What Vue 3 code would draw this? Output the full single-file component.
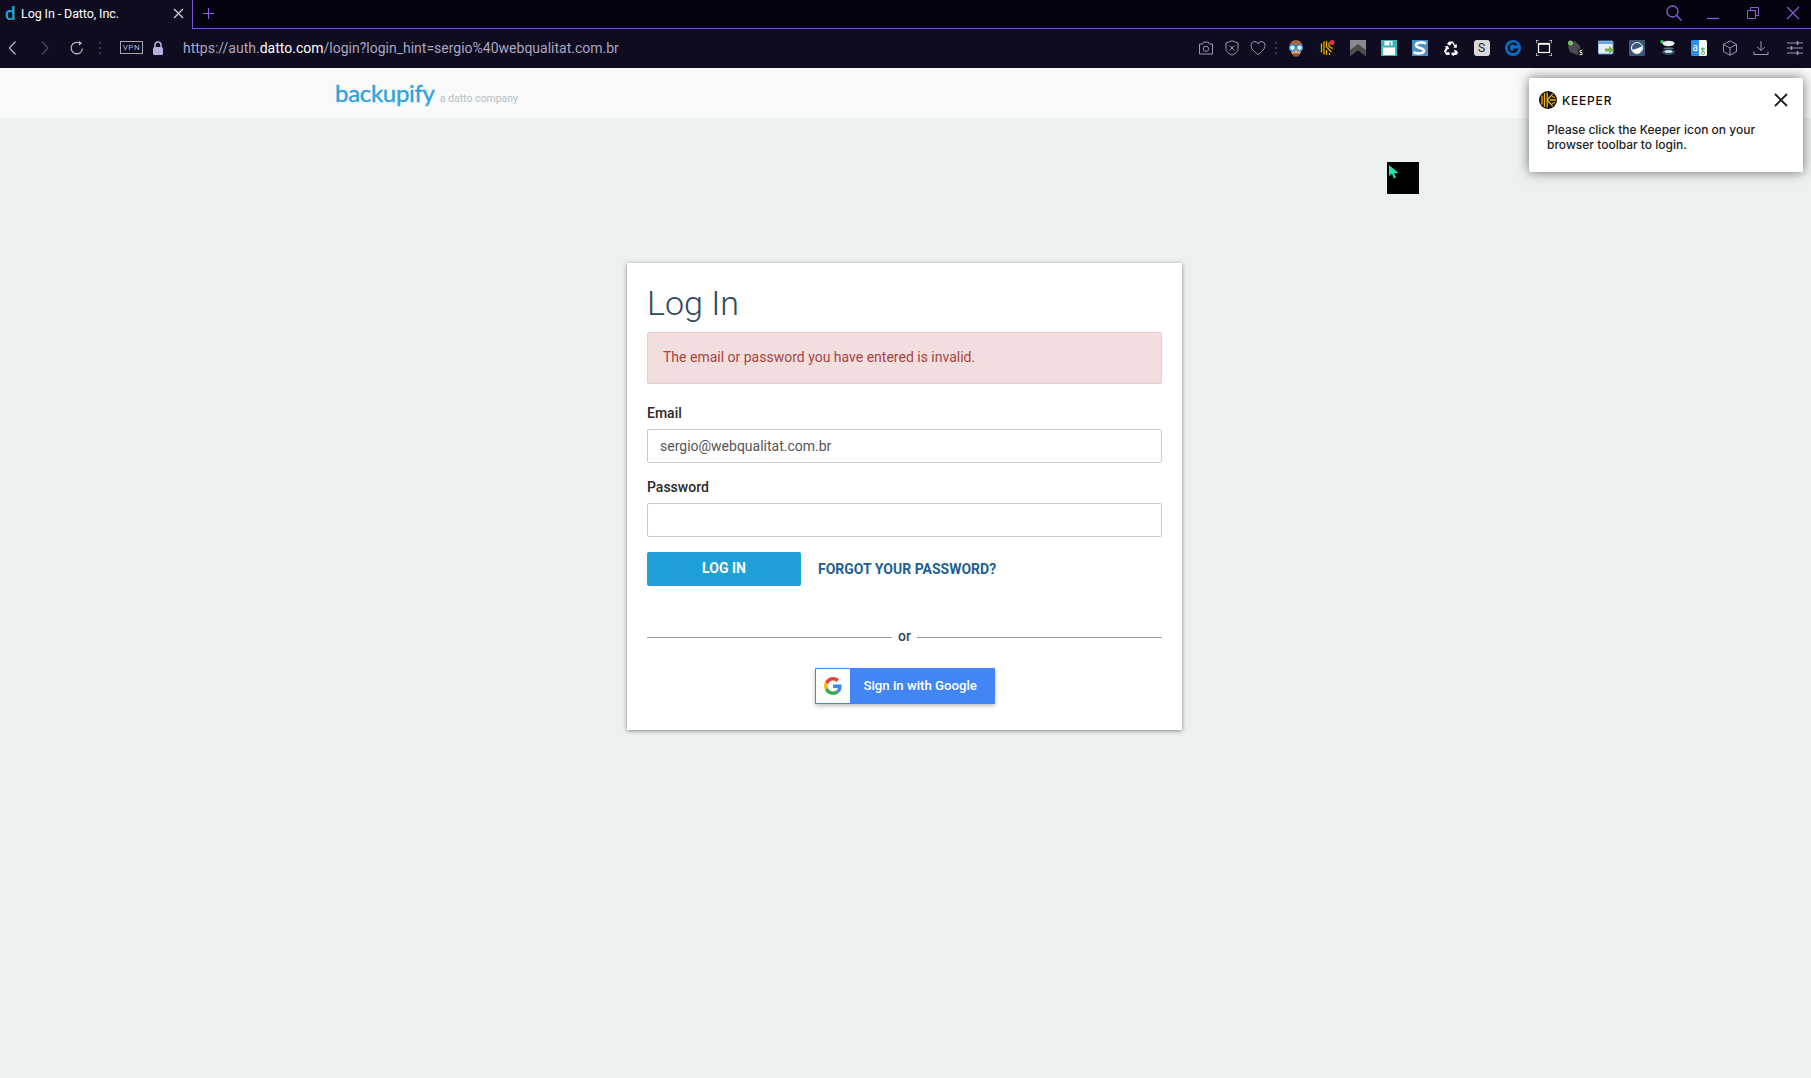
<script setup>
const email = 'sergio@webqualitat.com.br'
</script>

<template>
  <div class="shell">
    <div class="tabbar">
      <div class="tab">
        <span class="tab-favicon">d</span>
        <span class="tab-title">Log In - Datto, Inc.</span>
        <svg class="tab-close" width="11" height="11" viewBox="0 0 11 11"><path d="M1 1l9 9M10 1l-9 9" stroke="#d8d6e4" stroke-width="1.2" fill="none" /></svg>
      </div>
      <div class="tab-rest">
        <svg class="tab-plus" width="11" height="11" viewBox="0 0 11 11"><path d="M5.5 0v11M0 5.500h11" stroke="#8f63e6" stroke-width="1" fill="none" /></svg>
        <div class="window-controls">
          <svg class="wc wc-search" width="18" height="18" viewBox="0 0 18 18"><circle cx="7.500" cy="7.500" r="5.500" stroke="#8a5fe0" stroke-width="1.300" fill="none" /><path d="M11.500 11.500l5 5" stroke="#8a5fe0" stroke-width="1.300" /></svg>
          <svg class="wc" width="14" height="14" viewBox="0 0 14 14"><path d="M1 12.500h12" stroke="#8a5fe0" stroke-width="1.200" /></svg>
          <svg class="wc" width="14" height="14" viewBox="0 0 14 14"><path d="M1.500 4.500h8v8h-8zM4.500 4.500v-3h8v8h-3" stroke="#8a5fe0" stroke-width="1" fill="none" /></svg>
          <svg class="wc" width="14" height="14" viewBox="0 0 14 14"><path d="M1 1l12 12M13 1l-12 12" stroke="#8a5fe0" stroke-width="1.100" /></svg>
        </div>
      </div>
    </div>

    <div class="toolbar">
      <svg class="nav nav-back" width="10" height="16" viewBox="0 0 10 16"><path d="M8 1.500L2 8l6 6.500" stroke="#b5b2c6" stroke-width="1.300" fill="none" /></svg>
      <svg class="nav" width="10" height="16" viewBox="0 0 10 16"><path d="M2 1.500L8 8l-6 6.500" stroke="#4a4759" stroke-width="1.300" fill="none" /></svg>
      <svg class="nav" width="16" height="16" viewBox="0 0 16 16"><path d="M13.500 8.500A5.700 5.700 0 1 1 11 3.300" stroke="#b5b2c6" stroke-width="1.300" fill="none" /><path d="M10 .8l3.200 2.500-3.200 2.200z" fill="#b5b2c6" /></svg>
      <span class="dots"></span>
      <span class="vpn">VPN</span>
      <svg class="lock" width="12" height="14" viewBox="0 0 12 14"><path d="M3 6V4a3 3 0 0 1 6 0v2" stroke="#b9afe0" stroke-width="1.500" fill="none" /><rect x="1" y="6" width="10" height="8" rx="1.500" fill="#b9afe0" /></svg>
      <div class="url">https://auth.<b>datto.com</b>/login?login_hint=sergio%40webqualitat.com.br</div>

      <div class="tools">
        <span class="tool narrow"><svg width="16" height="16" viewBox="0 0 16 16"><path d="M1.500 4h3.200l1-2h4.600l1 2h3.200v10h-13z" stroke="#9a96b4" fill="none" /><circle cx="8" cy="8.800" r="2.600" stroke="#9a96b4" fill="none" /></svg></span>
        <span class="tool narrow"><svg width="16" height="16" viewBox="0 0 16 16"><path d="M8 .8l6 2.200v5.500c0 3-3 5.300-6 6.700-3-1.400-6-3.700-6-6.700V3z" stroke="#9a96b4" fill="none" /><path d="M5.500 5.500l5 5M10.500 5.500l-5 5" stroke="#9a96b4" /></svg></span>
        <span class="tool narrow"><svg width="16" height="16" viewBox="0 0 16 16"><path d="M8 14.500C4 11.300 1 8.800 1 5.500A3.600 3.600 0 0 1 8 4a3.600 3.600 0 0 1 7 1.500c0 3.300-3 5.800-7 9z" stroke="#9a96b4" fill="none" /></svg></span>
        <span class="dots tool-dots"></span>

        <span class="tool first"><svg width="18" height="18" viewBox="0 0 18 18"><path d="M2.500 9C2 4 5 1 9 1s7 3 6.500 8z" fill="#a5683a" /><path d="M3.500 9h11c0 5-2.500 8-5.500 8s-5.500-3-5.500-8z" fill="#e3a27a" /><circle cx="5.500" cy="8.800" r="2.900" fill="#e8f4ff" stroke="#2d8fe0" stroke-width="1.400" /><circle cx="12.500" cy="8.800" r="2.900" fill="#e8f4ff" stroke="#2d8fe0" stroke-width="1.400" /><path d="M6 14.500h6v3H6z" fill="#8a5630" /></svg></span>
        <span class="tool"><svg width="18" height="18" viewBox="0 0 18 18"><circle cx="9" cy="9" r="8" fill="#14120c" /><path d="M3.500 4.500v9M6 2.500v13M8.500 2v6l5 5M11 3.500v4l4 2M8.500 11v5M11.500 14v2" stroke="#e4a812" stroke-width="1.300" fill="none" /><circle cx="14" cy="3.500" r="2.500" fill="#e8304a" /></svg></span>
        <span class="tool"><svg width="16" height="16" viewBox="0 0 16 16"><path d="M0 0h16v16l-8-6-8 6z" fill="#8a8a8a" /><path d="M0 16V10l8-6 8 6v6l-8-6z" fill="#4d4d4d" /></svg></span>
        <span class="tool"><svg width="16" height="16" viewBox="0 0 16 16"><rect width="16" height="16" fill="#3eb0b6" /><path d="M2 1h9.500v4.500H10V2H8.500v3.500H3.500V1zM2 7.500h12V15H2z" fill="#fff" /></svg></span>
        <span class="tool"><svg width="16" height="16" viewBox="0 0 16 16"><rect width="16" height="16" fill="#4b8fc4" /><path d="M14 3.500C10 1.800 4 2.200 4 5.300c0 3.300 8 2.100 8 5.400 0 3-6 3.300-10.500 1.500" stroke="#fff" stroke-width="2.600" fill="none" /></svg></span>
        <span class="tool"><svg width="16" height="16" viewBox="0 0 16 16"><path d="M6 1.500h4l2 3.500 1.800-1v3.800H10l1.500-1-2.500-4-2 3-3-1.700zM1 11l2-3.500-1.700-1 3.600-.6 1.700 3.500-1.700-.6-2 3.500h3.600V15H3.200zM9 12.500h3.200l-1.700-2.800 3.500 1 1 2-1.500 2.300H11v1.500L8 14z" fill="#fff" /></svg></span>
        <span class="tool"><span class="ext-s">S</span></span>
        <span class="tool"><svg width="16" height="16" viewBox="0 0 16 16"><circle cx="8" cy="8" r="8" fill="#0a6cc0" /><path d="M11.500 5.200A4.300 4.300 0 1 0 12 9.500H8" stroke="#0b1016" stroke-width="2" fill="none" /></svg></span>
        <span class="tool"><svg width="16" height="16" viewBox="0 0 16 16"><path d="M0 3V0h3M13 0h3v3M16 13v3h-3M3 16H0v-3" stroke="#fff" stroke-width="1.200" fill="none" /><rect x="2.500" y="3.500" width="11" height="9" stroke="#fff" stroke-width="1.200" fill="none" /><path d="M2.500 4h11" stroke="#fff" stroke-width="1.500" /></svg></span>
        <span class="tool"><svg width="16" height="16" viewBox="0 0 16 16"><path d="M3 3l5-2 5 5 1 5-4 4-7-3-2-5z" fill="#4a4a50" /><circle cx="3.500" cy="3" r="2.500" fill="#7fbf6a" /><path d="M11 9h5v7h-5z" fill="#1a1a22" /><path d="M15 10.500h-2v2h2v2h-2.500" stroke="#ddd" fill="none" /></svg></span>
        <span class="tool"><svg width="16" height="16" viewBox="0 0 16 16"><rect y="1" width="15" height="13" rx="1" fill="#e4effa" stroke="#5b93cf" /><path d="M0 1.500h15v2.500H0z" fill="#6ea4dc" /><path d="M7 8.500h4V6l5 4-5 4v-2.500H7z" fill="#7ab648" /></svg></span>
        <span class="tool"><svg width="16" height="16" viewBox="0 0 16 16"><rect width="16" height="16" rx="1" fill="#3c5677" /><circle cx="8" cy="8" r="5.500" stroke="#fff" fill="none" /><path d="M2.800 9.500C6 10 10 7.500 13 6.500 13.500 10 11 13.500 8 13.500c-2.500 0-4.500-1.800-5.200-4z" fill="#fff" /></svg></span>
        <span class="tool"><svg width="16" height="16" viewBox="0 0 16 16"><circle cx="2" cy="1.800" r="1.800" fill="#2fd044" /><ellipse cx="8.500" cy="3.500" rx="6" ry="2.700" fill="#e8eef2" /><path d="M5 7.500h7L14 9H3z" fill="#5a7486" /><ellipse cx="8.500" cy="12" rx="6.500" ry="3" fill="#34536a" /><ellipse cx="8.500" cy="11.500" rx="4" ry="1.300" fill="#e8eef2" /></svg></span>
        <span class="tool"><svg width="16" height="16" viewBox="0 0 16 16"><path d="M1.500 0H8v16H1.500A1.500 1.500 0 0 1 0 14.500v-13A1.500 1.500 0 0 1 1.500 0z" fill="#2f8eec" /><path d="M8 0h6.500A1.500 1.500 0 0 1 16 1.500v13a1.500 1.500 0 0 1-1.500 1.500H8z" fill="#f4f6f2" /><text x="1.500" y="10.500" font-size="10" fill="#fff" font-family="Roboto, sans-serif">a</text><path d="M10 9h4M12 7.500c0 3-1 5.500-2 6.500M11 11c1 0 2.500.5 2.500 2s-1 1.500-2 1.500" stroke="#4f9a3d" fill="none" /></svg></span>
        <span class="tool"><svg width="16" height="16" viewBox="0 0 16 16"><path d="M8 .8l6.500 3.600v7.200L8 15.200l-6.500-3.600V4.400zM1.500 4.400L8 8l6.500-3.600M8 8v7.200" stroke="#9a96b4" fill="none" /></svg></span>
        <span class="tool"><svg width="16" height="16" viewBox="0 0 16 16"><path d="M8 1v9.500M4 7l4 3.500L12 7M1 11.500v3h14v-3" stroke="#9a96b4" fill="none" /></svg></span>
        <span class="tool tool-last"><svg width="16" height="16" viewBox="0 0 16 16"><path d="M0 3h16M0 8h16M0 13h16" stroke="#9a96b4" /><path d="M10.500 1v4M4.500 6v4M10.500 11v4" stroke="#9a96b4" stroke-width="1.500" /></svg></span>
      </div>
    </div>

    <div class="page">
      <header class="brand-bar">
        <span class="brand">backupify</span>
        <span class="brand-sub">a datto company</span>
      </header>

      <main class="content">
        <section class="card">
          <h1 class="title">Log In</h1>
          <div class="alert">The email or password you have entered is invalid.</div>

          <label class="label" for="email">Email</label>
          <input id="email" class="input input-email" type="text" :value="email" />

          <label class="label" for="password">Password</label>
          <input id="password" class="input" type="password" />

          <div class="actions">
            <button class="login" type="button">LOG IN</button>
            <a class="forgot" href="#">FORGOT YOUR PASSWORD?</a>
          </div>

          <div class="divider"><span>or</span></div>

          <button class="google" type="button">
            <span class="google-icon">
              <svg width="18" height="18" viewBox="0 0 48 48">
                <path fill="#EA4335" d="M24 9.500c3.540 0 6.710 1.220 9.210 3.600l6.850-6.850C35.900 2.380 30.470 0 24 0 14.620 0 6.510 5.380 2.560 13.220l7.980 6.190C12.430 13.720 17.740 9.500 24 9.500z" />
                <path fill="#4285F4" d="M46.980 24.550c0-1.570-.15-3.090-.38-4.550H24v9.020h12.940c-.58 2.960-2.260 5.480-4.780 7.180l7.730 6c4.510-4.180 7.090-10.360 7.090-17.650z" />
                <path fill="#FBBC05" d="M10.530 28.590c-.48-1.450-.76-2.990-.76-4.590s.27-3.140.76-4.590l-7.980-6.190C.92 16.460 0 20.120 0 24c0 3.880.92 7.540 2.560 10.780l7.970-6.190z" />
                <path fill="#34A853" d="M24 48c6.480 0 11.930-2.130 15.890-5.810l-7.730-6c-2.150 1.450-4.920 2.300-8.160 2.300-6.260 0-11.570-4.220-13.470-9.910l-7.980 6.190C6.510 42.620 14.620 48 24 48z" />
              </svg>
            </span>
            <span class="google-text">Sign in with Google</span>
          </button>
        </section>
      </main>

      <aside class="keeper">
        <div class="keeper-head">
          <svg width="18" height="18" viewBox="0 0 18 18"><circle cx="9" cy="9" r="9" fill="#14120c" /><path d="M3 4.500v9M5.500 2v14M8.200 1.500v15" stroke="#f0b31a" stroke-width="1.300" fill="none" /><path d="M8.200 9l5.500-6M8.200 9l5.500 6M11 9h6M13 5.500l3 1M13 12.500l3-1" stroke="#f0b31a" stroke-width="1.300" fill="none" /></svg>
          <span class="keeper-name">KEEPER</span>
          <svg class="keeper-close" width="14" height="14" viewBox="0 0 14 14"><path d="M1 1l12 12M13 1L1 13" stroke="#1a1a1a" stroke-width="1.800" /></svg>
        </div>
        <p class="keeper-text">Please click the Keeper icon on your browser toolbar to login.</p>
      </aside>

      <div class="cursor-box">
        <svg width="10" height="14" viewBox="0 0 10 14"><path d="M0 0v11l3-2.500L5 13.500l2-1L5 8h4.500z" fill="#1de9b6" /></svg>
      </div>
    </div>
  </div>
</template>

<style scoped>
.shell {
  min-height: 1078px;
  display: flex;
  flex-direction: column;
  font-family: Roboto, "Liberation Sans", sans-serif;
}

.tabbar {
  height: 29px;
  display: flex;
  background: #05030f;
}

.tab {
  width: 193px;
  box-sizing: border-box;
  display: flex;
  align-items: center;
  padding: 0 0 2px 5px;
  background: #0f0c1f;
  border-right: 1px solid #7a52d6;
  color: #fff;
}

.tab-favicon {
  width: 16px;
  font-size: 19px;
  line-height: 24px;
  font-weight: 500;
  color: #26a0da;
}

.tab-title {
  font-size: 12.500px;
  letter-spacing: -0.1px;
}

.tab-close {
  margin-left: auto;
  margin-right: 8px;
}

.tab-rest {
  flex: 1;
  display: flex;
  align-items: center;
  border-bottom: 1px solid #7a52d6;
  padding: 0 0 2px 10px;
}

.window-controls {
  margin-left: auto;
  margin-right: 11px;
  display: flex;
  align-items: center;
  gap: 26px;
}

.wc-search {
  margin-right: -3px;
}

.toolbar {
  height: 39px;
  box-sizing: border-box;
  display: flex;
  align-items: center;
  gap: 8px;
  padding-bottom: 2px;
  background: #0f0c1f;
  color: #b5b2c6;
}

.nav {
  width: 24px;
  flex: none;
}

.nav-back {
  width: 25px;
}

.dots {
  width: 2px;
  height: 12px;
  margin: 0 2px;
  flex: none;
  background: repeating-linear-gradient(#3b384b 0 2px, transparent 2px 5px);
}

.vpn {
  width: 23px;
  height: 13px;
  margin-left: 9px;
  box-sizing: border-box;
  border: 1px solid #a6a3b8;
  font-size: 8px;
  line-height: 11px;
  letter-spacing: 0.6px;
  text-align: center;
}

.lock {
  margin-left: 1px;
  flex: none;
}

.url {
  margin-left: 11px;
  font-size: 14px;
  color: #aaa6c0;
  white-space: nowrap;
}

.url b {
  font-weight: 400;
  color: #fff;
}

.tools {
  margin-left: auto;
  margin-right: 1px;
  display: flex;
  align-items: center;
}

.tool {
  width: 31px;
  display: flex;
  justify-content: center;
  align-items: center;
  flex: none;
}

.tool.narrow {
  width: 26px;
}

.tool-dots {
  margin: 0 0 0 4px;
}

.tool.first {
  margin-left: 3px;
}

.tool-last {
  margin-left: 3px;
}

.ext-s {
  width: 16px;
  height: 16px;
  border-radius: 3px;
  background: #d8d8d8;
  color: #222;
  font-size: 12px;
  line-height: 16px;
  text-align: center;
}

.page {
  position: relative;
  flex: 1;
  display: flex;
  flex-direction: column;
  background: #ecf0f1;
}

.brand-bar {
  height: 50px;
  box-sizing: border-box;
  display: flex;
  align-items: baseline;
  gap: 5px;
  padding: 9px 0 0 335px;
  background: #f8f9f9;
}

.brand {
  font-family: Lato, sans-serif;
  font-size: 24px;
  line-height: 32px;
  letter-spacing: -0.3px;
  color: #2fa3db;
  -webkit-text-stroke: 0.4px #2fa3db;
}

.brand-sub {
  font-size: 10.500px;
  color: #b4bfc7;
}

.content {
  flex: 1;
  display: flex;
  justify-content: center;
  align-items: flex-start;
  padding: 145px 2px 0 0;
}

.card {
  width: 555px;
  box-sizing: border-box;
  display: flex;
  flex-direction: column;
  padding: 20px 20px 26px;
  background: #fff;
  box-shadow: 0 1px 4px rgba(0, 0, 0, 0.45);
}

.title {
  margin: 0 0 9px;
  font-size: 34px;
  line-height: 40px;
  font-weight: 300;
  color: #2c4a5e;
}

.alert {
  height: 52px;
  box-sizing: border-box;
  margin-bottom: 19px;
  padding: 14px 15px;
  border: 1px solid #ebccd1;
  border-radius: 2px;
  background: #f2dede;
  color: #a94442;
  font-size: 14px;
  line-height: 20px;
}

.label {
  margin-bottom: 6px;
  font-size: 14px;
  line-height: 20px;
  font-weight: 500;
  color: #2a2a2a;
}

.input {
  height: 34px;
  box-sizing: border-box;
  margin-bottom: 14px;
  padding: 0 12px;
  border: 1px solid #c8cccf;
  border-radius: 2px;
  background: #fff;
  color: #555;
  font-family: inherit;
  font-size: 14px;
  outline: none;
}

.actions {
  display: flex;
  align-items: center;
  gap: 17px;
  margin-top: 1px;
}

.login {
  width: 154px;
  height: 34px;
  padding: 0 0 2px;
  border: 0;
  border-radius: 2px;
  background: #20a0d8;
  color: #fff;
  font-family: inherit;
  font-size: 14px;
  font-weight: 700;
}

.forgot {
  margin-bottom: 1px;
  color: #1f5f8f;
  font-size: 14px;
  font-weight: 700;
  text-decoration: none;
}

.divider {
  display: flex;
  align-items: center;
  gap: 6px;
  margin-top: 41px;
  color: #34495e;
  font-size: 14px;
  font-weight: 500;
}

.divider span {
  line-height: 18px;
  margin-bottom: 2px;
}

.divider::before,
.divider::after {
  content: "";
  flex: 1;
  height: 1px;
  margin-top: 1px;
  background: #98a1a8;
}

.google {
  align-self: center;
  width: 180px;
  height: 36px;
  display: flex;
  align-items: stretch;
  margin-top: 21px;
  padding: 1px;
  border: 0;
  border-radius: 1px;
  background: #4285f4;
  box-shadow: 0 2px 4px rgba(0, 0, 0, 0.25);
  font-family: inherit;
}

.google-icon {
  width: 34px;
  display: flex;
  align-items: center;
  justify-content: center;
  background: #fff;
}

.google-text {
  margin-left: 14px;
  color: #fff;
  font-size: 13.200px;
  font-weight: 500;
  line-height: 34px;
}

.keeper {
  position: absolute;
  top: 10px;
  left: 1529px;
  width: 274px;
  height: 94px;
  box-sizing: border-box;
  padding: 13px 15px 0 10px;
  border-radius: 2px;
  background: #fff;
  box-shadow: 0 0 12px rgba(0, 0, 0, 0.55);
  font-family: Inter, sans-serif;
}

.keeper-head {
  display: flex;
  align-items: center;
  gap: 5px;
}

.keeper-name {
  font-size: 12px;
  font-weight: 500;
  letter-spacing: 0.8px;
  color: #111;
}

.keeper-close {
  margin-left: auto;
}

.keeper-text {
  width: 235px;
  margin: 13px 0 0 8px;
  color: #222;
  font-size: 12px;
  line-height: 15px;
  font-weight: 500;
}

.cursor-box {
  position: absolute;
  top: 94px;
  left: 1387px;
  width: 32px;
  height: 32px;
  box-sizing: border-box;
  padding: 3px 0 0 2px;
  background: #000;
  line-height: 0;
}
</style>
